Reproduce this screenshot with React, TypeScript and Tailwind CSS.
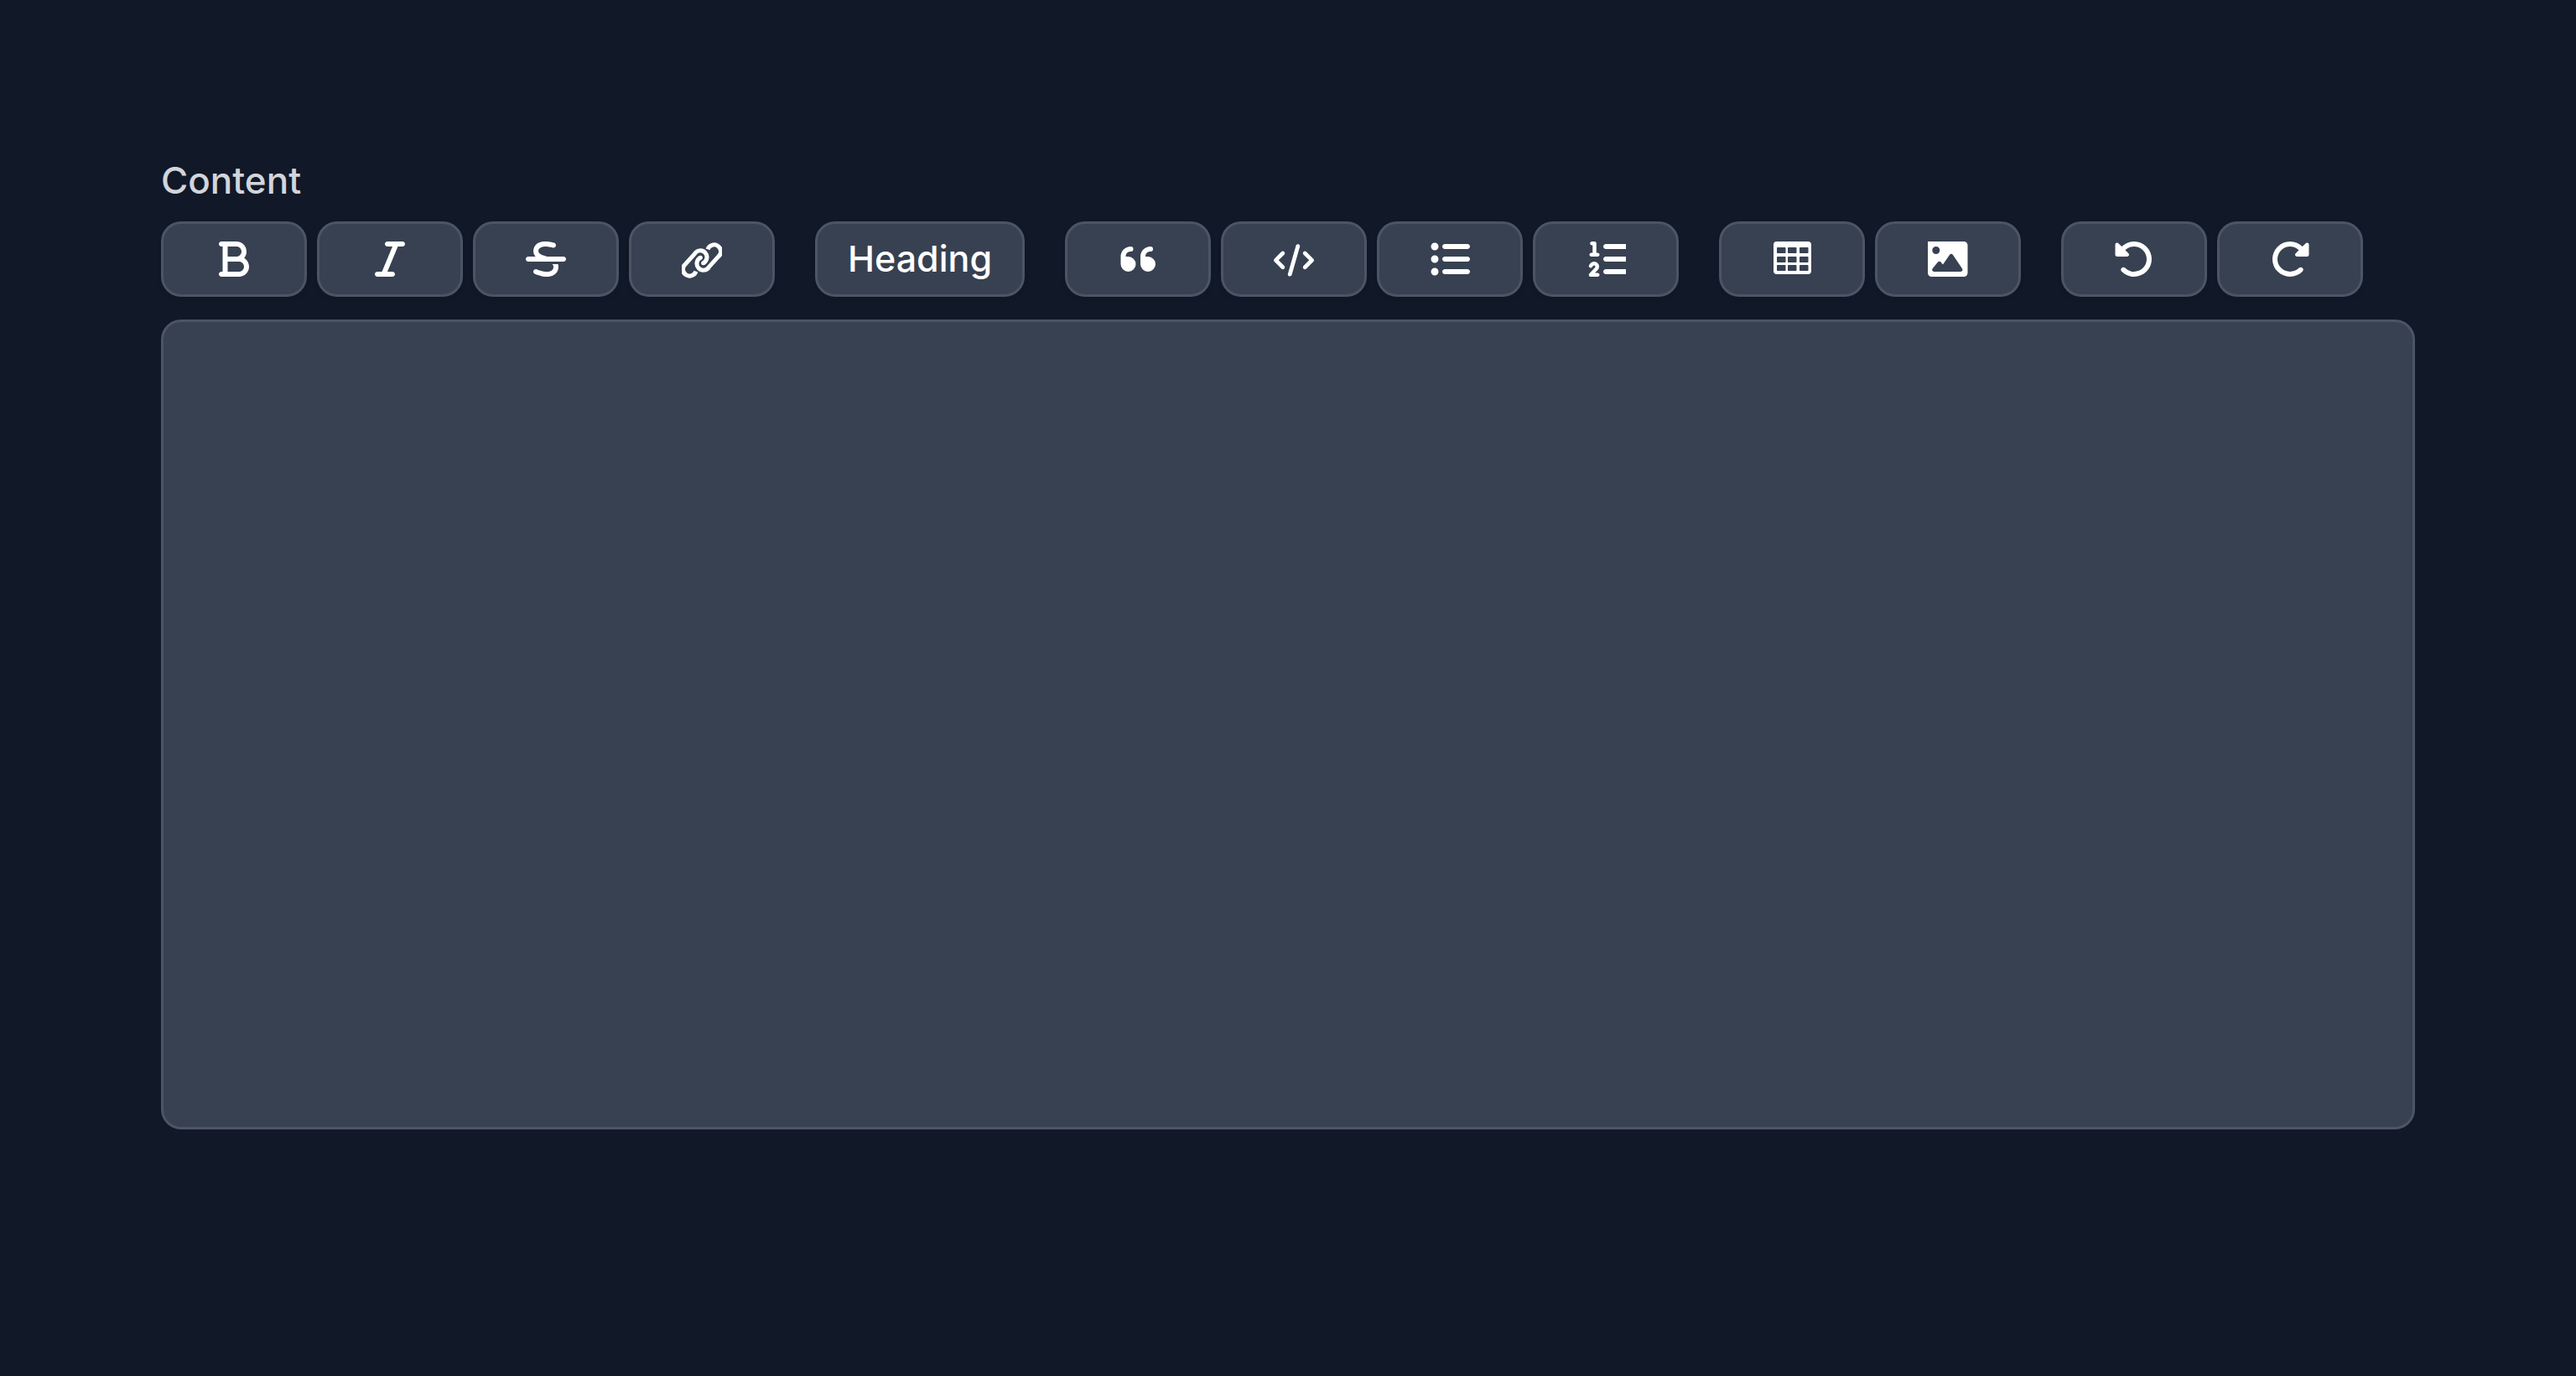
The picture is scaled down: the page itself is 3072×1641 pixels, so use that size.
import type { ComponentType, ReactNode, SVGProps } from "react";
import {
  FaBold,
  FaCode,
  FaItalic,
  FaListOl,
  FaListUl,
  FaRotateLeft,
  FaRotateRight,
  FaStrikethrough,
} from "react-icons/fa6";

type IconProps = SVGProps<SVGSVGElement>;
type IconType = ComponentType<IconProps>;

const TABLE_COLUMNS = [6, 19, 33];
const TABLE_ROWS = [10, 21, 31];

function TableIcon(props: IconProps) {
  return (
    <svg viewBox="0 0 48 48" {...props}>
      <rect x="2" y="3" width="45" height="39" rx="4" fill="currentColor" />
      {TABLE_ROWS.map((y) =>
        TABLE_COLUMNS.map((x) => (
          <rect key={`${x}-${y}`} x={x} y={y} width="10.5" height="7" rx="0.7" className="fill-[#374151]" />
        )),
      )}
    </svg>
  );
}

function LinkIcon(props: IconProps) {
  const half = (
    <>
      <path
        d="M75 131A24 24 0 1 1 38 104L70 68.5A23.5 23.5 0 1 1 101 101"
        fill="none"
        stroke="currentColor"
        strokeWidth="15"
      />
      <circle cx="101" cy="101" r="7.5" fill="currentColor" />
    </>
  );
  return (
    <svg viewBox="24 15 144 144" {...props}>
      {half}
      <g transform="rotate(180 96 91.5)">{half}</g>
    </svg>
  );
}

function QuoteIcon(props: IconProps) {
  return (
    <svg viewBox="0 0 48 48" fill="currentColor" {...props}>
      <path d="M15.5 9a3 3 0 0 1 0 6c-4 0-6 2.5-6 6h3a9 9 0 1 1-9 9v-9a12 12 0 0 1 12-12z" />
      <path d="M39 9a3 3 0 0 1 0 6c-4 0-6 2.5-6 6h3a9 9 0 1 1-9 9v-9a12 12 0 0 1 12-12z" />
    </svg>
  );
}

function ImageIcon(props: IconProps) {
  return (
    <svg viewBox="0 0 48 48" fill="currentColor" fillRule="evenodd" {...props}>
      <path d="M0 3H43a4.5 4.5 0 0 1 4.5 4.5V40.5a4.5 4.5 0 0 1-4.5 4.5H4.5A4.5 4.5 0 0 1 0 40.5ZM9.8 9a4.5 4.5 0 1 0 0 9a4.5 4.5 0 1 0 0-9ZM29.8 18.8a2.2 2.2 0 0 0-3.7 0L18 30.6L15.500 27.6a2.2 2.2 0 0 0-3.5 0L5.5 35.6A2.2 2.2 0 0 0 7.2 39H39.2A2.2 2.2 0 0 0 41.1 35.6Z" />
    </svg>
  );
}

function CodeIcon(props: IconProps) {
  return <FaCode {...(props as object)} viewBox="0 -18 640 512" />;
}

function OrderedListIcon(props: IconProps) {
  return <FaListOl {...(props as object)} viewBox="-32 0 512 512" />;
}

const GROUPS: { label: string; icon: IconType | null }[][] = [
  [
    { label: "Bold", icon: FaBold as IconType },
    { label: "Italic", icon: FaItalic as IconType },
    { label: "Strikethrough", icon: FaStrikethrough as IconType },
    { label: "Link", icon: LinkIcon },
  ],
  [{ label: "Heading", icon: null }],
  [
    { label: "Quote", icon: QuoteIcon },
    { label: "Code", icon: CodeIcon },
    { label: "Bulleted list", icon: FaListUl as IconType },
    { label: "Numbered list", icon: OrderedListIcon },
  ],
  [
    { label: "Table", icon: TableIcon },
    { label: "Image", icon: ImageIcon },
  ],
  [
    { label: "Undo", icon: FaRotateLeft as IconType },
    { label: "Redo", icon: FaRotateRight as IconType },
  ],
];

function ToolbarButton({ label, wide, children }: { label: string; wide: boolean; children: ReactNode }) {
  return (
    <button
      type="button"
      aria-label={label}
      className={`flex h-[90px] items-center justify-center rounded-3xl border-[3px] border-[#4b5563] bg-[#374151] text-[43px] leading-[60px] font-medium text-white shadow-[0_3px_6px_rgba(0,0,0,0.05)] ${
        wide ? "px-[60px]" : "min-w-[250px] px-9 pb-0.5"
      }`}
    >
      {children}
    </button>
  );
}

export default function App() {
  return (
    <main className="min-h-screen bg-[#111827] px-48 pt-[185px] pb-48 font-['Inter',sans-serif]">
      <label htmlFor="content" className="block text-[44px] leading-[60px] font-medium text-[#d1d5db]">
        Content
      </label>
      <div role="toolbar" aria-label="Formatting" className="mt-[19px] flex flex-wrap gap-x-12 gap-y-3">
        {GROUPS.map((group) => (
          <div key={group[0].label} className="flex gap-3">
            {group.map(({ label, icon: Icon }) => (
              <ToolbarButton key={label} label={label} wide={Icon !== null}>
                {Icon ? <Icon className="size-12" aria-hidden="true" /> : label}
              </ToolbarButton>
            ))}
          </div>
        ))}
      </div>
      <textarea
        id="content"
        className="mt-[27px] block h-[966px] w-full resize-none rounded-3xl border-[3px] border-[#4b5563] bg-[#374151] px-9 py-6 text-[43px] leading-[60px] text-white outline-none"
      />
    </main>
  );
}
